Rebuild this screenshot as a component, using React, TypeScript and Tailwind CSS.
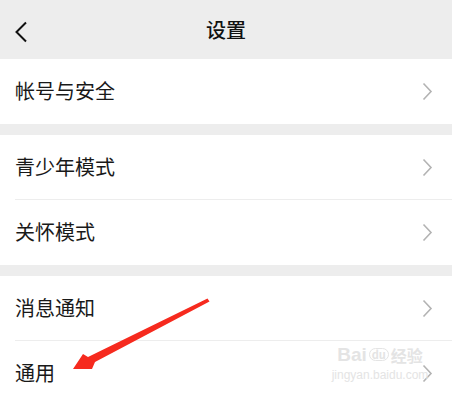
import type { ReactNode } from "react";

const font = { fontFamily: '"Noto Sans CJK SC", "Noto Sans", sans-serif' };

function Chevron() {
  return (
    <svg width="11" height="19" viewBox="0 0 11 19" className="shrink-0">
      <path d="M1.5 1.5 L9 9.5 L1.5 17.5" fill="none" stroke="#b3b3b3" strokeWidth="1.6" />
    </svg>
  );
}

function Row({ label, divider }: { label: string; divider?: boolean }) {
  return (
    <div className="bg-white">
      <div className="flex h-[64px] items-center justify-between pl-[15px] pr-[19px]">
        <span className="text-[20px] leading-none text-[#191919]">{label}</span>
        <Chevron />
      </div>
      <div className={divider ? "ml-[15px] h-px bg-[#ededed]" : "h-px bg-white"} />
    </div>
  );
}

function Group({ children }: { children: ReactNode }) {
  return <div className="flex flex-col">{children}</div>;
}

export default function App() {
  return (
    <div className="relative h-[403px] w-[452px] overflow-hidden bg-[#ededed]" style={font}>
      <header className="relative flex h-[59px] items-center justify-center">
        <svg width="14" height="22" viewBox="0 0 14 22" className="absolute left-[14px] top-[21px]">
          <path d="M12 1.5 L2.5 11 L12 20.5" fill="none" stroke="#111" strokeWidth="2" />
        </svg>
        <span className="text-[20px] font-medium leading-none text-[#111]">设置</span>
      </header>

      <Group>
        <Row label="帐号与安全" />
      </Group>
      <div className="h-[11px]" />
      <Group>
        <Row label="青少年模式" divider />
        <Row label="关怀模式" />
      </Group>
      <div className="h-[11px]" />
      <Group>
        <Row label="消息通知" divider />
        <Row label="通用" />
      </Group>

      {/* watermark */}
      <div className="pointer-events-none absolute left-[334px] top-[345px] flex w-[92px] flex-col items-center text-[#e4e4e4]">
        <div className="flex items-center gap-[2px] text-[19px] font-bold leading-none">
          <span style={{ fontFamily: '"Liberation Sans", sans-serif' }}>Bai</span>
          <span className="rounded-full border border-[#e4e4e4] px-[2px] text-[11px]">du</span>
          <span className="text-[16px]">经验</span>
        </div>
        <span className="mt-[5px] text-[12px] leading-none" style={{ fontFamily: '"Liberation Sans", sans-serif' }}>
          jingyan.baidu.com
        </span>
      </div>

      {/* red annotation arrow */}
      <svg className="pointer-events-none absolute left-0 top-0" width="452" height="403" viewBox="0 0 452 403">
        <path d="M207.5 298.5 L209.5 301.5 L95 362 L92 369 L73 369 L83 354 L88 357 Z" fill="#f62a1e" />
      </svg>
    </div>
  );
}
